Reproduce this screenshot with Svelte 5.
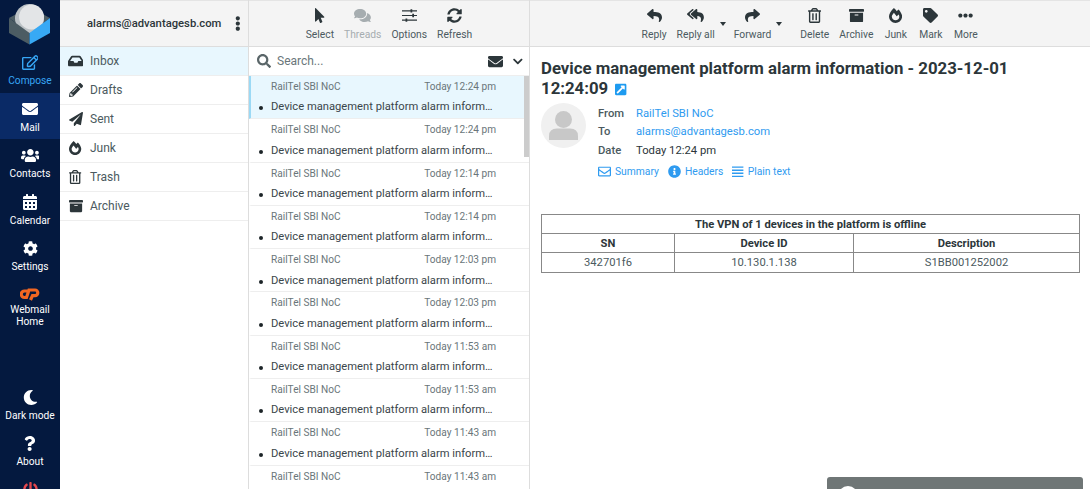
<script>
	const icons = {
		envelope: [512, 'M502.3 190.8c3.9-3.1 9.7-.2 9.7 4.7V400c0 26.5-21.5 48-48 48H48c-26.5 0-48-21.5-48-48V195.6c0-5 5.7-7.8 9.7-4.7 22.4 17.4 52.1 39.5 154.1 113.6 21.1 15.4 56.7 47.8 92.2 47.6 35.7.3 72-32.8 92.3-47.6 102-74.1 131.6-96.3 154-113.7zM256 320c23.2.4 56.6-29.2 73.4-41.4 132.7-96.3 142.8-104.7 173.4-128.7 5.8-4.5 9.2-11.5 9.2-18.9v-19c0-26.5-21.5-48-48-48H48C21.5 64 0 85.5 0 112v19c0 7.4 3.4 14.3 9.2 18.9 30.6 23.9 40.7 32.4 173.4 128.7 16.8 12.2 50.2 41.8 73.4 41.4z'],
		envelopeOpen: [512, 'M464 64H48C21.49 64 0 85.49 0 112v288c0 26.51 21.49 48 48 48h416c26.51 0 48-21.49 48-48V112c0-26.51-21.49-48-48-48zm0 48v40.805c-22.422 18.259-58.168 46.651-134.587 106.49-16.841 13.247-50.201 45.072-73.413 44.701-23.208.375-56.579-31.459-73.413-44.701C106.18 199.465 70.425 171.067 48 152.805V112h416zM48 400V214.398c22.914 18.251 55.409 43.862 104.938 82.646 21.857 17.205 60.134 55.186 103.062 54.955 42.717.231 80.509-37.199 103.053-54.947 49.528-38.783 82.032-64.401 104.947-82.653V400H48z'],
		search: [512, 'M505 442.7L405.3 343c-4.5-4.5-10.6-7-17-7H372c27.6-35.3 44-79.7 44-128C416 93.1 322.9 0 208 0S0 93.1 0 208s93.1 208 208 208c48.3 0 92.7-16.4 128-44v16.3c0 6.4 2.5 12.5 7 17l99.7 99.7c9.4 9.4 24.6 9.4 33.9 0l28.3-28.3c9.4-9.4 9.4-24.6.1-34zM208 336c-70.7 0-128-57.2-128-128 0-70.7 57.2-128 128-128 70.7 0 128 57.2 128 128 0 70.7-57.2 128-128 128z'],
		reply: [512, 'M8.309 189.836L184.313 37.851C199.719 24.546 224 35.347 224 56.015v80.053c160.629 1.839 288 34.032 288 186.258 0 61.441-39.581 122.309-83.333 154.132-13.653 9.931-33.111-2.533-28.077-18.631 45.344-145.012-21.507-183.51-176.59-185.742V360c0 20.7-24.3 31.453-39.687 18.164l-176.004-152c-11.071-9.562-11.086-26.753 0-36.328z'],
		replyAll: [576, 'M136.309 189.836L312.313 37.851C327.72 24.546 352 35.348 352 56.015v82.763c129.182 10.231 224 52.212 224 183.548 0 61.441-39.582 122.309-83.333 154.132-13.653 9.931-33.111-2.533-28.077-18.631 38.512-123.162-3.922-169.482-112.59-182.015v84.175c0 20.701-24.3 31.453-39.687 18.164L136.309 226.164c-11.071-9.561-11.086-26.753 0-36.328zm-128 36.328L184.313 378.15C199.7 391.439 224 380.687 224 359.986v-15.818l-108.606-93.785A55.96 55.96 0 0 1 96 207.998a55.953 55.953 0 0 1 19.393-42.38L224 71.832V56.015c0-20.667-24.28-31.469-39.687-18.164L8.309 189.836c-11.086 9.575-11.071 26.767 0 36.328z'],
		forward: [512, 'M503.691 189.836L327.687 37.851C312.281 24.546 288 35.347 288 56.015v80.053C127.371 137.907 0 170.1 0 322.326c0 61.441 39.581 122.309 83.333 154.132 13.653 9.931 33.111-2.533 28.077-18.631C66.066 312.814 132.917 274.316 288 272.085V360c0 20.7 24.3 31.453 39.687 18.164l176.004-152c11.071-9.562 11.086-26.753 0-36.328z'],
		trash: [448, 'M268 416h24a12 12 0 0 0 12-12V188a12 12 0 0 0-12-12h-24a12 12 0 0 0-12 12v216a12 12 0 0 0 12 12zM432 80h-82.41l-34-56.7A48 48 0 0 0 274.41 0H173.59a48 48 0 0 0-41.16 23.3L98.41 80H16A16 16 0 0 0 0 96v16a16 16 0 0 0 16 16h16v336a48 48 0 0 0 48 48h288a48 48 0 0 0 48-48V128h16a16 16 0 0 0 16-16V96a16 16 0 0 0-16-16zM171.84 50.91A6 6 0 0 1 177 48h94a6 6 0 0 1 5.15 2.91L293.61 80H154.39zM368 464H80V128h288zm-212-48h24a12 12 0 0 0 12-12V188a12 12 0 0 0-12-12h-24a12 12 0 0 0-12 12v216a12 12 0 0 0 12 12z'],
		archive: [512, 'M32 448c0 17.7 14.3 32 32 32h384c17.7 0 32-14.3 32-32V160H32v288zm160-212c0-6.6 5.4-12 12-12h104c6.6 0 12 5.4 12 12v8c0 6.6-5.4 12-12 12H204c-6.6 0-12-5.4-12-12v-8zM480 32H32C14.3 32 0 46.3 0 64v48c0 8.8 7.2 16 16 16h480c8.8 0 16-7.2 16-16V64c0-17.7-14.3-32-32-32z'],
		tag: [512, 'M0 252.118V48C0 21.49 21.49 0 48 0h204.118a48 48 0 0 1 33.941 14.059l211.882 211.882c18.745 18.745 18.745 49.137 0 67.882L293.823 497.941c-18.745 18.745-49.137 18.745-67.882 0L14.059 286.059A48 48 0 0 1 0 252.118zM112 64c-26.51 0-48 21.49-48 48s21.49 48 48 48 48-21.49 48-48-21.49-48-48-48z'],
		more: [512, 'M328 256c0 39.8-32.2 72-72 72s-72-32.2-72-72 32.2-72 72-72 72 32.2 72 72zm104-72c-39.8 0-72 32.2-72 72s32.2 72 72 72 72-32.2 72-72-32.2-72-72-72zm-352 0c-39.8 0-72 32.2-72 72s32.2 72 72 72 72-32.2 72-72-32.2-72-72-72z'],
		sync: [512, 'M370.72 133.28C339.458 104.008 298.888 87.962 255.848 88c-77.458.068-144.328 53.178-162.791 126.85-1.344 5.363-6.122 9.15-11.651 9.15H24.103c-7.498 0-13.194-6.807-11.807-14.176C33.933 94.924 134.813 8 256 8c66.448 0 126.791 26.136 171.315 68.685L463.03 40.97C478.149 25.851 504 36.559 504 57.941V192c0 13.255-10.745 24-24 24H345.941c-21.382 0-32.09-25.851-16.971-40.971l41.75-41.749zM32 296h134.059c21.382 0 32.09 25.851 16.971 40.971l-41.75 41.75c31.262 29.273 71.835 45.319 114.876 45.28 77.418-.07 144.315-53.144 162.787-126.849 1.344-5.363 6.122-9.15 11.651-9.15h57.304c7.498 0 13.194 6.807 11.807 14.176C478.067 417.076 377.187 504 256 504c-66.448 0-126.791-26.136-171.315-68.685L48.97 471.03C33.851 486.149 8 475.441 8 454.059V320c0-13.255 10.745-24 24-24z'],
		pointer: [320, 'M302.189 329.126H196.105l55.831 135.993c3.889 9.428-.555 19.999-9.444 23.999l-49.165 21.427c-9.165 4-19.443-.571-23.332-9.714l-53.053-129.136-86.664 89.138C18.729 472.71 0 463.554 0 447.977V18.299C0 1.899 19.921-6.096 30.277 5.443l284.412 292.542c11.472 11.179 3.007 31.141-12.5 31.141z'],
		comments: [576, 'M416 192c0-88.4-93.1-160-208-160S0 103.6 0 192c0 34.3 14.1 65.9 38 92-13.4 30.2-35.5 54.2-35.8 54.5-2.2 2.3-2.8 5.7-1.5 8.7S4.8 352 8 352c36.6 0 66.9-12.3 88.7-25 32.2 15.7 70.3 25 111.3 25 114.9 0 208-71.6 208-160zm122 220c23.9-26 38-57.7 38-92 0-66.9-53.5-124.2-129.3-148.1.9 6.6 1.3 13.3 1.3 20.1 0 105.9-107.7 192-240 192-10.8 0-21.3-.8-31.7-1.9C207.8 439.6 281.8 480 368 480c41 0 79.1-9.2 111.3-25 21.8 12.7 52.1 25 88.7 25 3.2 0 6.1-1.9 7.3-4.8 1.3-2.9.7-6.3-1.5-8.7-.3-.3-22.4-24.2-35.8-54.5z'],
		sliders: [512, 'M0 80h512v36H0zM0 238h512v36H0zM0 396h512v36H0zM290 40h60v116h-60zM350 198h60v116h-60zM120 356h60v116h-60z'],
		plane: [512, 'M476 3.2L12.5 270.6c-18.1 10.4-15.8 35.6 2.2 43.2L121 358.4l287.3-253.2c5.5-4.9 13.3 2.6 8.6 8.3L176 407v80.5c0 23.6 28.5 32.9 42.5 15.8L282 426l124.6 52.2c14.2 6 30.4-2.9 33-18.2l72-432C515 7.8 493.3-6.8 476 3.2z'],
		pencil: [512, 'M497.9 142.1l-46.1 46.1c-4.7 4.7-12.3 4.7-17 0l-111-111c-4.7-4.7-4.7-12.3 0-17l46.1-46.1c18.7-18.7 49.1-18.7 67.9 0l60.1 60.1c18.8 18.7 18.8 49.1 0 67.9zM284.2 99.8L21.6 362.4.4 483.9c-2.9 16.4 11.4 30.6 27.8 27.8l121.5-21.3 262.6-262.6c4.7-4.7 4.7-12.3 0-17l-111-111c-4.8-4.7-12.4-4.7-17.1 0zM124.1 339.9c-5.5-5.5-5.5-14.3 0-19.8l154-154c5.5-5.5 14.3-5.5 19.8 0s5.5 14.3 0 19.8l-154 154c-5.5 5.5-14.3 5.5-19.8 0zM88 424h48v36.3l-64.5 11.3-31.1-31.1L51.7 376H88v48z'],
		inbox: [576, 'M567.938 243.908L462.25 85.374A48.003 48.003 0 0 0 422.311 64H153.689a48 48 0 0 0-39.938 21.374L8.062 243.908A47.994 47.994 0 0 0 0 270.533V400c0 26.51 21.49 48 48 48h480c26.51 0 48-21.49 48-48V270.533a47.994 47.994 0 0 0-8.062-26.625zM162.252 128h251.497l85.333 128H376l-32 64H232l-32-64H76.918l85.334-128z'],
		info: [512, 'M256 8C119.043 8 8 119.083 8 256c0 136.997 111.043 248 248 248s248-111.003 248-248C504 119.083 392.957 8 256 8zm0 110c23.196 0 42 18.804 42 42s-18.804 42-42 42-42-18.804-42-42 18.804-42 42-42zm56 254c0 6.627-5.373 12-12 12h-88c-6.627 0-12-5.373-12-12v-24c0-6.627 5.373-12 12-12h12v-64h-12c-6.627 0-12-5.373-12-12v-24c0-6.627 5.373-12 12-12h64c6.627 0 12 5.373 12 12v100h12c6.627 0 12 5.373 12 12v24z'],
		users: [640, 'M96 224c35.3 0 64-28.7 64-64s-28.7-64-64-64-64 28.7-64 64 28.7 64 64 64zm448 0c35.3 0 64-28.7 64-64s-28.7-64-64-64-64 28.7-64 64 28.7 64 64 64zm32 32h-64c-17.6 0-33.5 7.1-45.1 18.6 40.3 22.1 68.9 62 75.1 109.4h66c17.7 0 32-14.3 32-32v-32c0-35.3-28.7-64-64-64zm-256 0c61.9 0 112-50.1 112-112S381.9 32 320 32 208 82.1 208 144s50.1 112 112 112zm76.8 32h-8.3c-20.8 10-43.9 16-68.5 16s-47.6-6-68.5-16h-8.3C179.6 288 128 339.6 128 403.2V432c0 26.5 21.5 48 48 48h288c26.5 0 48-21.5 48-48v-28.8c0-63.6-51.6-115.2-115.2-115.2zm-223.7-13.4C161.5 263.1 145.6 256 128 256H64c-35.3 0-64 28.7-64 64v32c0 17.7 14.3 32 32 32h65.9c6.3-47.4 34.9-87.3 75.2-109.4z'],
		calendar: [448, 'M0 464c0 26.5 21.5 48 48 48h352c26.5 0 48-21.5 48-48V192H0v272zm320-196c0-6.6 5.4-12 12-12h40c6.6 0 12 5.4 12 12v40c0 6.6-5.4 12-12 12h-40c-6.6 0-12-5.4-12-12v-40zm0 128c0-6.6 5.4-12 12-12h40c6.6 0 12 5.4 12 12v40c0 6.6-5.4 12-12 12h-40c-6.6 0-12-5.4-12-12v-40zM192 268c0-6.6 5.4-12 12-12h40c6.6 0 12 5.4 12 12v40c0 6.6-5.4 12-12 12h-40c-6.6 0-12-5.4-12-12v-40zm0 128c0-6.6 5.4-12 12-12h40c6.6 0 12 5.4 12 12v40c0 6.6-5.4 12-12 12h-40c-6.6 0-12-5.4-12-12v-40zM64 268c0-6.6 5.4-12 12-12h40c6.6 0 12 5.4 12 12v40c0 6.6-5.4 12-12 12H76c-6.6 0-12-5.4-12-12v-40zm0 128c0-6.6 5.4-12 12-12h40c6.6 0 12 5.4 12 12v40c0 6.6-5.4 12-12 12H76c-6.6 0-12-5.4-12-12v-40zM400 64h-48V16c0-8.8-7.2-16-16-16h-32c-8.8 0-16 7.2-16 16v48H160V16c0-8.8-7.2-16-16-16h-32c-8.8 0-16 7.2-16 16v48H48C21.5 64 0 85.5 0 112v48h448v-48c0-26.5-21.5-48-48-48z'],
		cog: [512, 'M487.4 315.7l-42.6-24.6c4.3-23.2 4.3-47 0-70.2l42.6-24.6c4.9-2.8 7.1-8.6 5.5-14-11.1-35.6-30-67.8-54.7-94.6-3.8-4.1-10-5.1-14.8-2.3L380.8 110c-17.9-15.4-38.5-27.3-60.8-35.1V25.8c0-5.6-3.9-10.5-9.4-11.7-36.7-8.2-74.3-7.8-109.2 0-5.5 1.2-9.4 6.1-9.4 11.7V75c-22.2 7.9-42.8 19.8-60.8 35.1L88.7 85.5c-4.9-2.8-11-1.9-14.8 2.3-24.7 26.7-43.6 58.9-54.7 94.6-1.7 5.4.6 11.2 5.5 14L67.3 221c-4.3 23.2-4.3 47 0 70.2l-42.6 24.6c-4.9 2.8-7.1 8.6-5.5 14 11.1 35.6 30 67.8 54.7 94.6 3.8 4.1 10 5.1 14.8 2.3l42.6-24.6c17.9 15.4 38.5 27.3 60.8 35.1v49.2c0 5.6 3.9 10.5 9.4 11.7 36.7 8.2 74.3 7.8 109.2 0 5.5-1.2 9.4-6.1 9.4-11.7v-49.2c22.2-7.9 42.8-19.8 60.8-35.1l42.6 24.6c4.9 2.8 11 1.9 14.8-2.3 24.7-26.7 43.6-58.9 54.7-94.6 1.5-5.5-.7-11.3-5.6-14.1zM256 336c-44.1 0-80-35.9-80-80s35.9-80 80-80 80 35.9 80 80-35.9 80-80 80z'],
		moon: [512, 'M283.211 512c78.962 0 151.079-35.925 198.857-94.792 7.068-8.708-.639-21.43-11.562-19.35-124.203 23.654-238.262-71.576-238.262-196.954 0-72.222 38.662-138.635 101.498-174.394 9.686-5.512 7.25-20.197-3.756-22.23A258.156 258.156 0 0 0 283.211 0c-141.309 0-256 114.511-256 256 0 141.309 114.511 256 256 256z'],
		question: [384, 'M202.021 0C122.202 0 70.503 32.703 29.914 91.026c-7.363 10.58-5.093 25.086 5.178 32.874l43.138 32.709c10.373 7.865 25.132 6.026 33.253-4.148 25.049-31.381 43.63-49.449 82.757-49.449 30.764 0 68.816 19.799 68.816 49.631 0 22.552-18.617 34.134-48.993 51.164-35.423 19.86-82.299 44.576-82.299 106.405V320c0 13.255 10.745 24 24 24h72.471c13.255 0 24-10.745 24-24v-5.773c0-42.86 125.268-44.645 125.268-160.627C377.504 66.256 286.902 0 202.021 0zM192 373.459c-38.196 0-69.271 31.075-69.271 69.271 0 38.195 31.075 69.27 69.271 69.27s69.271-31.075 69.271-69.271-31.075-69.27-69.271-69.27z'],
		compose: [576, 'M402.3 344.9l32-32c5-5 13.7-1.5 13.7 5.7V464c0 26.5-21.5 48-48 48H48c-26.5 0-48-21.5-48-48V112c0-26.5 21.5-48 48-48h273.5c7.1 0 10.7 8.6 5.7 13.7l-32 32c-1.5 1.5-3.5 2.3-5.7 2.3H48v352h352V350.5c0-2.1.8-4.1 2.3-5.6zm156.6-201.8L296.3 405.7l-90.4 10c-26.2 2.9-48.5-19.2-45.6-45.6l10-90.4L432.9 17.1c22.9-22.9 59.9-22.9 82.7 0l43.2 43.2c22.9 22.9 22.9 60 .1 82.8zM460.1 174L402 115.9 216.2 301.8l-7.3 65.3 65.3-7.3L460.1 174zm64.8-79.7l-43.2-43.2c-4.1-4.1-10.8-4.1-14.8 0L436 82l58.1 58.1 30.9-30.9c4-4.2 4-10.8-.1-14.9z'],
		fire: [448, 'M323.56 51.2c-20.8 19.3-39.58 39.59-56.22 59.97C240.08 73.62 206.28 35.53 168 0 69.74 91.17 0 209.96 0 281.6 0 408.85 100.29 512 224 512s224-103.15 224-230.4c0-53.27-51.98-163.14-124.44-230.4zm-19.47 340.65C282.43 407.01 255.72 416 226.86 416 154.71 416 96 368.26 96 290.75c0-38.61 24.31-72.63 72.79-130.75 6.93 7.98 98.83 125.34 98.83 125.34l58.63-66.88c4.14 6.85 7.91 13.55 11.27 19.97 27.35 52.19 15.81 118.97-33.43 153.42z'],
		external: [448, 'M448 80v352c0 26.51-21.49 48-48 48H48c-26.51 0-48-21.49-48-48V80c0-26.51 21.49-48 48-48h352c26.51 0 48 21.49 48 48zm-88 16H248.029c-21.313 0-32.08 25.861-16.971 40.971l31.984 31.987L67.515 364.485c-4.686 4.686-4.686 12.284 0 16.971l31.029 31.029c4.687 4.686 12.285 4.686 16.971 0l195.526-195.526 31.988 31.991C358.058 263.977 384 253.425 384 231.979V120c0-13.255-10.745-24-24-24z'],
		bars: [448, 'M0 60h448v52H0zM0 180h448v52H0zM0 300h448v52H0zM0 420h448v52H0z'],
		dots: [192, 'M96 184c39.8 0 72 32.2 72 72s-32.2 72-72 72-72-32.2-72-72 32.2-72 72-72zM24 80c0 39.8 32.2 72 72 72s72-32.2 72-72S135.800 8 96 8 24 40.200 24 80zm0 352c0 39.800 32.200 72 72 72s72-32.200 72-72-32.200-72-72-72-72 32.200-72 72z'],
		chevron: [448, 'M207.029 381.476L12.686 187.132c-9.373-9.373-9.373-24.569 0-33.941l22.667-22.667c9.357-9.357 24.522-9.375 33.901-.04L224 284.505l154.745-154.021c9.379-9.335 24.544-9.317 33.901.04l22.667 22.667c9.373 9.373 9.373 24.569 0 33.941L240.971 381.476c-9.373 9.372-24.569 9.372-33.942 0z'],
		power: [512, 'M400 54.100c63 45 104 118.600 104 201.900 0 136.800-110.800 247.700-247.500 248C120 504.300 8.200 393 8 256.400 7.900 173.100 48.900 99.300 111.800 54.200c11.700-8.300 28-4.800 35 7.700L162.600 90c5.900 10.500 3.100 23.800-6.600 31-41.500 30.800-68 79.600-68 134.900-.1 92.300 74.500 168.100 168 168.100 91.600 0 168.600-74.200 168-169.100-.3-51.800-24.700-101.800-68.100-134-9.700-7.200-12.400-20.500-6.500-30.900l15.800-28.100c7-12.400 23.200-16.100 34.800-7.800zM296 264V24c0-13.300-10.700-24-24-24h-32c-13.300 0-24 10.700-24 24v240c0 13.300 10.700 24 24 24h32c13.300 0 24-10.700 24-24z']
	};

	const nav = [
		{ label: 'Compose', icon: 'compose', size: 15, cls: 'compose' },
		{ label: 'Mail', icon: 'envelope', size: 16, cls: 'active' },
		{ label: 'Contacts', icon: 'users', size: 15, cls: '' },
		{ label: 'Calendar', icon: 'calendar', size: 16, cls: '' },
		{ label: 'Settings', icon: 'cog', size: 15, cls: '' }
	];

	const folders = [
		{ label: 'Inbox', icon: 'inbox', size: 14, selected: true },
		{ label: 'Drafts', icon: 'pencil', size: 14 },
		{ label: 'Sent', icon: 'plane', size: 14 },
		{ label: 'Junk', icon: 'fire', size: 14 },
		{ label: 'Trash', icon: 'trash', size: 14 },
		{ label: 'Archive', icon: 'archive', size: 14 }
	];

	const listTools = [
		{ label: 'Select', icon: 'pointer' },
		{ label: 'Threads', icon: 'comments', disabled: true },
		{ label: 'Options', icon: 'sliders' },
		{ label: 'Refresh', icon: 'sync' }
	];

	const mailTools = [
		{ label: 'Reply', icon: 'reply' },
		{ label: 'Reply all', icon: 'replyAll', caret: true },
		{ label: 'Forward', icon: 'forward', caret: true, spaced: true },
		{ label: 'Delete', icon: 'trash' },
		{ label: 'Archive', icon: 'archive' },
		{ label: 'Junk', icon: 'fire' },
		{ label: 'Mark', icon: 'tag' },
		{ label: 'More', icon: 'more' }
	];

	const times = ['12:24 pm', '12:24 pm', '12:14 pm', '12:14 pm', '12:03 pm', '12:03 pm', '11:53 am', '11:53 am', '11:43 am', '11:43 am'];
</script>

{#snippet icon(name, size)}
	<svg class="icon" width={size * icons[name][0] / 512} height={size} viewBox="0 0 {icons[name][0]} 512" aria-hidden="true">
		<path d={icons[name][1]} fill="currentColor" />
	</svg>
{/snippet}

{#snippet toolbtn(tool)}
	<div class="tool" class:disabled={tool.disabled}>
		<span class="tool-icon">{@render icon(tool.icon, 15)}</span>
		<span>{tool.label}</span>
	</div>
{/snippet}

<div class="layout">
	<nav class="nav">
		<div class="logo">
			<svg width="42" height="41" viewBox="0 0 42 41" aria-hidden="true">
				<path d="M0 14 L20.500 3 L41 14 L20.500 29 Z" fill="#4c5c63" />
				<circle cx="20.500" cy="14.500" r="14.500" fill="#bcc2c6" />
				<circle cx="22.500" cy="13" r="12.500" fill="#e3e5e7" />
				<path d="M0 14 L20.500 29 L20.500 40.500 L0 29 Z" fill="#4c5c63" />
				<path d="M41 14 L20.500 29 L20.500 40.500 L41 29 Z" fill="#37a9f5" />
			</svg>
		</div>
		{#each nav as item}
			<div class="nav-item {item.cls}">
				<span class="nav-icon">{@render icon(item.icon, item.size)}</span>
				<span>{item.label}</span>
			</div>
		{/each}
		<div class="nav-item webmail">
			<svg class="cpanel" width="20" height="14" viewBox="0 0 20 14" aria-hidden="true">
				<path d="M7.500 4 H4.500 A3 3 0 0 0 4.500 10.500 H6.500 L9 3 H15 A2.800 2.800 0 0 1 15 8.600 H12.500 L10.500 13" fill="none" stroke="#f26722" stroke-width="3.200" />
			</svg>
			<span>Webmail<br />Home</span>
		</div>
		<div class="nav-spacer"></div>
		<div class="nav-item">
			<span class="nav-icon">{@render icon('moon', 15)}</span>
			<span>Dark mode</span>
		</div>
		<div class="nav-item">
			<span class="nav-icon">{@render icon('question', 15)}</span>
			<span>About</span>
		</div>
		<div class="nav-item logout">
			<span class="nav-icon">{@render icon('power', 15)}</span>
		</div>
	</nav>

	<section class="folders">
		<header class="user-bar">
			<span class="user">alarms@advantagesb.com</span>
			<span class="kebab">{@render icon('dots', 15)}</span>
		</header>
		<ul class="folder-list">
			{#each folders as folder}
				<li class:selected={folder.selected}>
					<span class="folder-icon">{@render icon(folder.icon, folder.size)}</span>
					{folder.label}
				</li>
			{/each}
		</ul>
	</section>

	<section class="list">
		<header class="toolbar">
			{#each listTools as tool}
				{@render toolbtn(tool)}
			{/each}
		</header>
		<div class="search">
			<span class="search-icon">{@render icon('search', 14)}</span>
			<span class="placeholder">Search...</span>
			<span class="search-env">{@render icon('envelope', 15)}</span>
			<span class="search-chev">{@render icon('chevron', 11)}</span>
		</div>
		<div class="rows">
			<div class="scrollbar"></div>
			{#each times as time, i}
				<div class="row" class:selected={i === 0}>
					<div class="row-top">
						<span>RailTel SBI NoC</span>
						<span>Today {time}</span>
					</div>
					<div class="row-subject">Device management platform alarm inform…</div>
				</div>
			{/each}
		</div>
	</section>

	<main class="content">
		<header class="toolbar">
			{#each mailTools as tool}
				{@render toolbtn(tool)}
				{#if tool.caret}
					<span class="caret" class:spaced={tool.spaced}></span>
				{/if}
			{/each}
		</header>
		<article class="message">
			<h1>
				Device management platform alarm information - 2023-12-01 12:24:09
				<span class="ext">{@render icon('external', 13)}</span>
			</h1>
			<div class="meta">
				<div class="avatar">
					<svg width="45" height="45" viewBox="0 0 45 45" aria-hidden="true">
						<circle cx="22.500" cy="22.500" r="22.500" fill="#f0f0f0" />
						<circle cx="22.500" cy="16.500" r="8.500" fill="#c8c8c8" />
						<path d="M8 33 Q8 25.500 16 25.500 H29 Q37 25.500 37 33 V37 H8 Z" fill="#c8c8c8" />
					</svg>
				</div>
				<div class="details">
					<div class="detail"><b>From</b><a href="#from">RailTel SBI NoC</a></div>
					<div class="detail"><b>To</b><a href="#to">alarms@advantagesb.com</a></div>
					<div class="detail"><b>Date</b><span>Today 12:24 pm</span></div>
					<div class="links">
						<a href="#summary">{@render icon('envelopeOpen', 13)} Summary</a>
						<a href="#headers">{@render icon('info', 13)} Headers</a>
						<a href="#plain">{@render icon('bars', 13)} Plain text</a>
					</div>
				</div>
			</div>
			<table>
				<colgroup>
					<col class="c1" />
					<col class="c2" />
					<col />
				</colgroup>
				<thead>
					<tr><th colspan="3">The VPN of 1 devices in the platform is offline</th></tr>
					<tr>
						<th>SN</th>
						<th>Device ID</th>
						<th>Description</th>
					</tr>
				</thead>
				<tbody>
					<tr>
						<td>342701f6</td>
						<td>10.130.1.138</td>
						<td>S1BB001252002</td>
					</tr>
				</tbody>
			</table>
		</article>
		<div class="toast"><span class="toast-dot"></span></div>
	</main>
</div>

<style>
	:global(body) {
		margin: 0;
		background: #fff;
		font-family: Roboto, "Liberation Sans", sans-serif;
		color: #2c363a;
	}

	.layout {
		display: grid;
		grid-template-columns: 60px 189px 281px 1fr;
		height: 489px;
		overflow: hidden;
	}

	.icon {
		display: block;
	}

	.nav {
		background: #04193f;
		color: #fff;
		font-size: 10.2px;
		height: 489px;
		overflow: hidden;
	}

	.logo {
		height: 46px;
		display: flex;
		justify-content: center;
		padding-top: 4px;
		box-sizing: border-box;
	}

	.nav-item {
		height: 46.4px;
		box-sizing: border-box;
		display: flex;
		flex-direction: column;
		align-items: center;
		text-align: center;
		padding-top: 7px;
		line-height: 13px;
		white-space: nowrap;
	}

	.nav-icon {
		height: 18px;
		display: flex;
		align-items: center;
		margin-bottom: 3px;
	}

	.nav-item.compose {
		color: #37a6f5;
		height: 47px;
		padding-top: 7px;
	}

	.nav-item.active {
		background: #0a2a66;
	}

	.nav-item.webmail {
		height: 56px;
		line-height: 12px;
	}

	.cpanel {
		margin: 1px 0 3px;
	}

	.nav-spacer {
		height: 46.5px;
	}

	.nav-item.logout {
		color: #e5484d;
	}

	.folders,
	.list {
		border-right: 1px solid #ddd;
		box-sizing: border-box;
		min-width: 0;
	}

	.user-bar {
		height: 47px;
		box-sizing: border-box;
		background: #f4f4f4;
		border-top: 1px solid #e4e4e4;
		border-bottom: 1px solid #ddd;
		display: flex;
		align-items: center;
		padding-left: 27px;
	}

	.user {
		font-size: 11.25px;
		font-weight: 500;
		white-space: nowrap;
	}

	.kebab {
		margin-left: 14px;
	}

	.folder-list {
		list-style: none;
		margin: 0;
		padding: 0;
		font-size: 12px;
		color: #4b5a60;
	}

	.folder-list li {
		height: 28.95px;
		box-sizing: border-box;
		border-bottom: 1px solid #eee;
		display: flex;
		align-items: center;
	}

	.folder-list li.selected {
		background: #e8f7fe;
	}

	.folder-icon {
		width: 30px;
		padding-left: 1px;
		box-sizing: border-box;
		display: flex;
		justify-content: center;
		color: #2c363a;
	}

	.toolbar {
		height: 47px;
		box-sizing: border-box;
		background: #f4f4f4;
		border-top: 1px solid #e4e4e4;
		border-bottom: 1px solid #ddd;
		display: flex;
		justify-content: center;
		font-size: 10.3px;
		color: #4b5a60;
	}

	.tool {
		min-width: 25px;
		padding: 5px 5px 0;
		display: flex;
		flex-direction: column;
		align-items: center;
		white-space: nowrap;
		line-height: 13px;
	}

	.tool-icon {
		height: 18px;
		margin-bottom: 4px;
		color: #2c363a;
		display: flex;
		align-items: center;
	}

	.tool.disabled,
	.tool.disabled .tool-icon {
		color: #a6adb0;
	}

	.caret {
		width: 9px;
		height: 0;
		position: relative;
		top: 21px;
	}

	.caret::before {
		content: '';
		position: absolute;
		left: 0;
		top: 0;
		border-left: 3.5px solid transparent;
		border-right: 3.5px solid transparent;
		border-top: 4px solid #2c363a;
	}

	.caret.spaced {
		margin-right: 10px;
	}

	.search {
		height: 29px;
		box-sizing: border-box;
		display: flex;
		align-items: center;
		padding-left: 8px;
		border-bottom: 1px solid #eee;
		font-size: 12px;
		color: #6a767a;
	}

	.search-icon {
		color: #5a6669;
		margin-right: 6px;
	}

	.placeholder {
		flex: 1;
	}

	.search-env {
		color: #2c363a;
		margin-right: 10px;
	}

	.search-chev {
		color: #2c363a;
		margin-right: 6px;
	}

	.rows {
		position: relative;
		height: 413px;
		overflow: hidden;
	}

	.scrollbar {
		position: absolute;
		top: 0;
		right: 0;
		width: 5px;
		height: 81px;
		background: #ccc;
		z-index: 1;
	}

	.row {
		height: 43.3px;
		box-sizing: border-box;
		padding: 4px 33px 0 20px;
		border-bottom: 1px solid #eee;
		border-left: 2px solid transparent;
	}

	.row.selected {
		background: #e8f7fe;
		border-left-color: #9bd9f5;
	}

	.row-top {
		display: flex;
		justify-content: space-between;
		font-size: 10.1px;
		line-height: 14px;
		color: #6a767a;
	}

	.row-subject {
		position: relative;
		margin-top: 5.4px;
		font-size: 11.2px;
		line-height: 16px;
		color: #3b464b;
		white-space: nowrap;
	}

	.row-subject::before {
		content: '';
		position: absolute;
		left: -12px;
		top: 7px;
		width: 4px;
		height: 4px;
		border-radius: 50%;
		background: #1c2427;
	}

	.content {
		position: relative;
		min-width: 0;
	}

	.message {
		padding: 11px 10px 0 11px;
	}

	h1 {
		margin: 0;
		padding-right: 40px;
		font-size: 16.8px;
		line-height: 20px;
		font-weight: 700;
		color: #2c363a;
	}

	.ext {
		display: inline-block;
		vertical-align: -2px;
		margin-left: 3px;
		color: #1e9bf0;
	}

	.meta {
		display: flex;
		margin-top: 5px;
		height: 111px;
	}

	.avatar {
		width: 57px;
	}

	.details {
		font-size: 11.25px;
	}

	.detail {
		display: flex;
		height: 18.5px;
		align-items: center;
	}

	.detail b {
		width: 38px;
		font-weight: 500;
		color: #4b5a60;
	}

	.detail:first-child {
		margin-top: 1px;
	}

	a {
		color: #2f9bf0;
		text-decoration: none;
	}

	.links {
		display: flex;
		gap: 9px;
		margin-top: 5px;
		font-size: 10.3px;
	}

	.links a {
		display: flex;
		align-items: center;
		gap: 4px;
	}

	table {
		width: 539px;
		border-collapse: collapse;
		table-layout: fixed;
		font-size: 11.2px;
		text-align: center;
		color: #4b5a60;
	}

	th,
	td {
		border: 1px solid #888;
		padding: 1px 0 0;
		height: 17.2px;
		line-height: 16px;
	}

	th {
		color: #2c363a;
		font-weight: 700;
	}

	.c1 {
		width: 133px;
	}

	.c2 {
		width: 179px;
	}

	.toast {
		position: absolute;
		left: 297px;
		top: 477px;
		width: 256px;
		height: 40px;
		background: #6f7676;
		border-radius: 3px;
	}

	.toast-dot {
		position: absolute;
		left: 11px;
		top: 9px;
		width: 20px;
		height: 20px;
		border-radius: 50%;
		background: #fff;
	}
</style>
